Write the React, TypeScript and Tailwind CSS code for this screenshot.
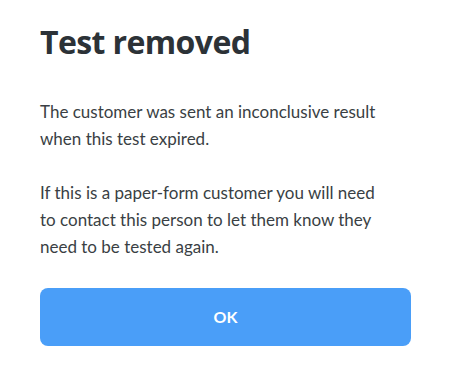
export default function App() {
  return (
    <div className="min-h-screen bg-white font-['Lato',sans-serif]">
      <div className="px-10 pt-[22px]">
        <h1 className="font-['Open_Sans',sans-serif] text-[32px] font-bold leading-[40px] tracking-[-0.6px] text-[#2c3237]">
          Test removed
        </h1>
        <div className="mt-[36px] text-[17px] leading-[27px] text-[#3a3f44]">
          <p>
            The customer was sent an inconclusive result
            <br />
            when this test expired.
          </p>
          <p className="mt-[27px]">
            If this is a paper-form customer you will need
            <br />
            to contact this person to let them know they
            <br />
            need to be tested again.
          </p>
        </div>
        <button className="mt-[28px] flex h-[58px] w-[371px] items-center justify-center rounded-lg bg-[#4a9ef8] text-[16px] font-bold text-white">
          OK
        </button>
      </div>
    </div>
  );
}
